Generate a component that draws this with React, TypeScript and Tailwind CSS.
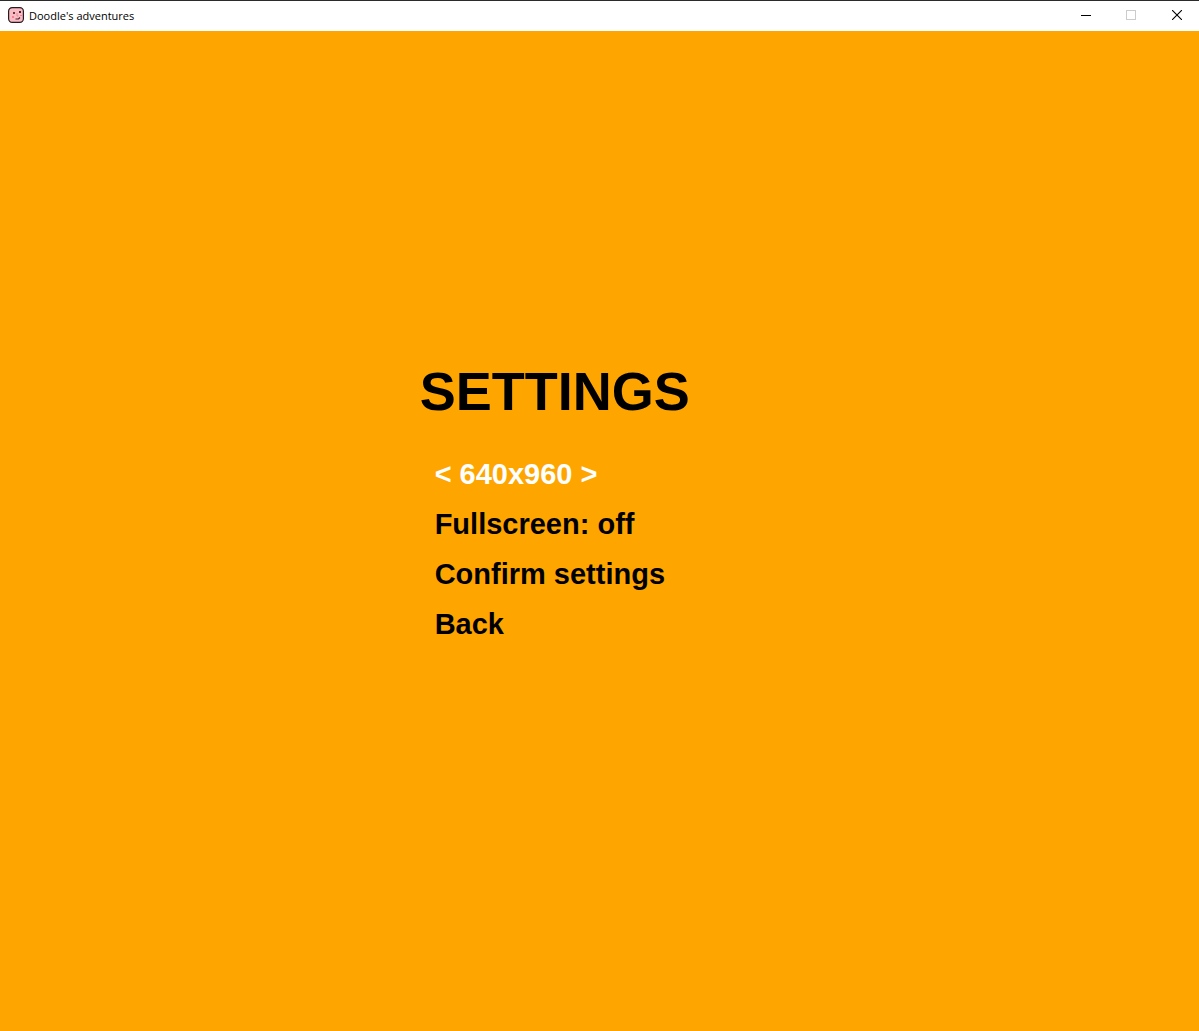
import { useState } from "react";

const resolutions = ["640x960", "768x1024", "1280x720"];

function AppIcon() {
  return (
    <svg className="size-4" viewBox="0 0 16 16" aria-hidden="true">
      <rect
        x="0.6"
        y="0.6"
        width="14.8"
        height="14.8"
        rx="3.6"
        fill="#f9bcc4"
        stroke="#2a1a1f"
        strokeWidth="1.2"
      />
      <rect x="5" y="5" width="2" height="2" fill="#6b353d" />
      <rect x="11" y="4" width="2" height="2" fill="#4b252d" />
      <path d="M9 6v3h1.5" fill="none" stroke="#e08d99" strokeWidth="1" />
      <path d="M7.5 12h3l1.5-1.5" fill="none" stroke="#4b252d" strokeWidth="1.2" />
      <rect x="4" y="9" width="2" height="2" fill="#f2808e" />
      <rect x="12" y="8" width="2" height="1" fill="#ef7f8d" />
    </svg>
  );
}

function TitleBar() {
  return (
    <header className="flex h-[31px] shrink-0 items-stretch border-t border-[#2b2b2b] bg-white">
      <div className="flex flex-1 items-center gap-[5px] pl-2">
        <div className="pb-0.5">
          <AppIcon />
        </div>
        <span className="font-['Open_Sans',sans-serif] text-[11px] leading-4 font-normal text-black">
          Doodle's adventures
        </span>
      </div>
      <div className="flex pb-0.5">
        <button type="button" aria-label="Minimize" className="flex w-[45px] items-center justify-center">
          <svg className="size-[10px]" viewBox="0 0 10 10" shapeRendering="crispEdges">
            <path d="M0 5.5h10" stroke="#000" />
          </svg>
        </button>
        <button type="button" aria-label="Maximize" disabled className="flex w-[46px] items-center justify-center">
          <svg className="size-[10px]" viewBox="0 0 10 10" shapeRendering="crispEdges">
            <path d="M0.5 0.5h9v9h-9z" fill="none" stroke="#ccc" />
          </svg>
        </button>
        <button type="button" aria-label="Close" className="flex w-[45px] items-center justify-center">
          <svg className="size-[10px]" viewBox="0 0 10 10">
            <path d="M0 0l10 10M10 0L0 10" stroke="#000" strokeWidth="1.1" />
          </svg>
        </button>
      </div>
    </header>
  );
}

export default function App() {
  const [index, setIndex] = useState(0);
  const [fullscreen, setFullscreen] = useState(false);
  const step = (by: number) =>
    setIndex((index + by + resolutions.length) % resolutions.length);

  return (
    <div className="flex min-h-screen flex-col bg-[#ffa500] font-['Liberation_Sans',Arial,sans-serif] font-bold text-black">
      <TitleBar />
      <main className="flex flex-1 flex-col items-start pt-80 pl-[35%]">
        <h1 className="text-[54px] leading-[80px]">SETTINGS</h1>
        <div className="mt-[18px] flex flex-col items-start pl-[15px] text-[29px] leading-[50px]">
          <div className="flex gap-2 text-white">
            <button type="button" aria-label="Previous resolution" onClick={() => step(-1)}>
              &lt;
            </button>
            <span>{resolutions[index]}</span>
            <button type="button" aria-label="Next resolution" onClick={() => step(1)}>
              &gt;
            </button>
          </div>
          <button type="button" onClick={() => setFullscreen(!fullscreen)}>
            Fullscreen: {fullscreen ? "on" : "off"}
          </button>
          <button type="button">Confirm settings</button>
          <button type="button">Back</button>
        </div>
      </main>
    </div>
  );
}
